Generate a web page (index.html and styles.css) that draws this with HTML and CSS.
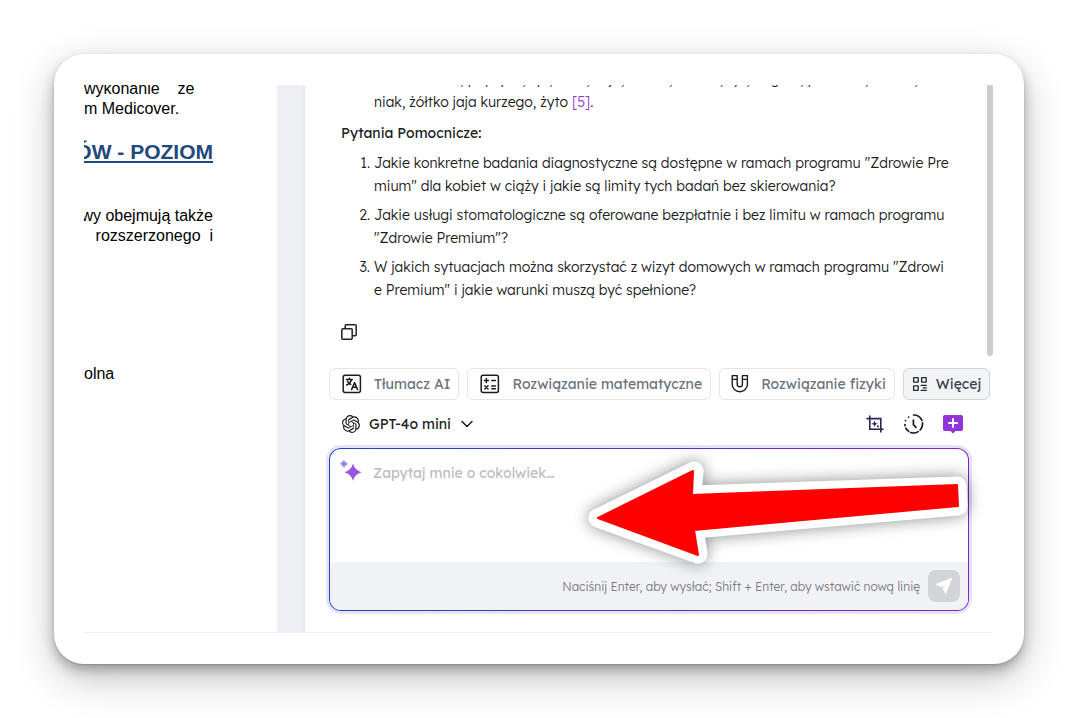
FILE: index.html
```html
<!DOCTYPE html>
<html lang="pl">
<head>
    <meta charset="UTF-8">
    <meta name="viewport" content="width=device-width, initial-scale=1.0">
    <title>Czat z dokumentem</title>
    <link rel="stylesheet" href="styles.css">
</head>
<body>
    <main class="card">
        <div class="workspace">
            <!-- Document preview -->
            <section class="document">
                <p class="doc-text doc-first">wykonanie    ze
m Medicover.</p>
                <h2 class="doc-heading"><span>ÓW - POZIOM</span></h2>
                <p class="doc-text doc-right">wy obejmują także
rozszerzonego  i</p>
                <p class="doc-text doc-last">olna</p>
            </section>

            <div class="divider"></div>

            <!-- Chat -->
            <section class="chat">
                <div class="messages">
                    <div class="answer">
                        <p class="answer-tail">mleko krowie, papryka, ryż, seler, soja, fasola, orzech, ryż, migdał, pszenica, banan, ziem<br>niak, żółtko jaja kurzego, żyto <a href="#">[5]</a>.</p>
                        <h3>Pytania Pomocnicze:</h3>
                        <ol>
                            <li>Jakie konkretne badania diagnostyczne są dostępne w ramach programu "Zdrowie Pre<br>mium" dla kobiet w ciąży i jakie są limity tych badań bez skierowania?</li>
                            <li>Jakie usługi stomatologiczne są oferowane bezpłatnie i bez limitu w ramach programu<br>"Zdrowie Premium"?</li>
                            <li>W jakich sytuacjach można skorzystać z wizyt domowych w ramach programu "Zdrowi<br>e Premium" i jakie warunki muszą być spełnione?</li>
                        </ol>
                        <button class="icon-btn copy-btn" type="button" aria-label="Kopiuj">
                            <svg width="16" height="16" viewBox="0 0 16 16" fill="none" stroke="#222" stroke-width="1.5" stroke-linejoin="round">
                                <rect x="0.8" y="4.8" width="10.4" height="10.4" rx="1"/>
                                <path d="M4.2 4.8V1.8a1 1 0 0 1 1-1h9a1 1 0 0 1 1 1v9a1 1 0 0 1-1 1h-3"/>
                            </svg>
                        </button>
                    </div>
                    <div class="scrollbar"></div>
                </div>

                <div class="chips">
                    <button class="chip" type="button">
                        <svg width="20" height="20" viewBox="0 0 20 20" fill="none" stroke="#1c1c1e" stroke-width="1.5" stroke-linecap="round" stroke-linejoin="round">
                            <rect x="1.2" y="1.2" width="17.2" height="17.2" rx="2"/>
                            <path d="M4.4 5.6h6M7.4 4.2v1.4M9.4 5.8C8.8 8.4 7 10 4.6 11M5.5 7.2c.7 1.5 1.7 2.4 3.2 3.2M9.6 15.6l3-7 3 7M10.7 13.3h3.8"/>
                        </svg>
                        Tłumacz AI
                    </button>
                    <button class="chip" type="button">
                        <svg width="20" height="20" viewBox="0 0 20 20" fill="none" stroke="#1c1c1e" stroke-width="1.5" stroke-linecap="round">
                            <rect x="1.2" y="1.2" width="17.2" height="17.2" rx="2"/>
                            <path d="M4.4 6.6h4M6.4 4.6v4M11.8 6.6h3.6M4.8 11.8l3.2 3.2M8 11.8L4.8 15M11.8 12h3.6M11.8 14.8h3.6"/>
                        </svg>
                        Rozwiązanie matematyczne
                    </button>
                    <button class="chip chip-physics" type="button">
                        <svg width="20" height="20" viewBox="0 0 20 20" fill="none" stroke="#1c1c1e" stroke-width="1.4" stroke-linejoin="round">
                            <path d="M2.2 1.6h5v8.6a2.6 2.6 0 0 0 5.2 0V1.600h5v8.600a7.600 7.600 0 0 1-15.200 0zM2.200 5.400h5M12.400 5.400h5"/>
                        </svg>
                        Rozwiązanie fizyki
                    </button>
                    <button class="chip chip-more" type="button">
                        <svg width="16" height="16" viewBox="0 0 16 16" fill="none" stroke="#222" stroke-width="1.3" stroke-linecap="round">
                            <rect x="1.6" y="1.6" width="4.6" height="4.6" rx=".5"/>
                            <rect x="9.6" y="1.6" width="4.6" height="4.6" rx=".5"/>
                            <rect x="1.6" y="9.8" width="4.6" height="4.6" rx=".5"/>
                            <path d="M9.2 9.4h5M11.4 11.9h2.8M9.2 14.4h5"/>
                        </svg>
                        Więcej
                    </button>
                </div>

                <div class="toolbar">
                    <button class="model" type="button">
                        <svg width="18" height="18" viewBox="0 0 24 24" fill="#1c1c1e">
                            <path d="M22.28 9.82a5.98 5.98 0 0 0-.52-4.91 6.05 6.05 0 0 0-6.51-2.9A6.07 6.07 0 0 0 4.98 4.18a5.98 5.98 0 0 0-4 2.9 6.05 6.05 0 0 0 .74 7.1 5.98 5.98 0 0 0 .51 4.91 6.05 6.05 0 0 0 6.51 2.9A5.98 5.98 0 0 0 13.26 24a6.06 6.06 0 0 0 5.77-4.21 5.99 5.99 0 0 0 4-2.9 6.06 6.06 0 0 0-.75-7.07zm-9.02 12.61a4.48 4.48 0 0 1-2.88-1.04l.14-.08 4.78-2.76a.8.8 0 0 0 .39-.68v-6.74l2.02 1.17a.07.07 0 0 1 .04.05v5.58a4.5 4.5 0 0 1-4.49 4.5zM3.6 18.3a4.47 4.47 0 0 1-.54-3.01l.14.08 4.78 2.76a.77.77 0 0 0 .78 0l5.84-3.37v2.33a.08.08 0 0 1-.03.06L9.74 19.95A4.5 4.5 0 0 1 3.6 18.3zM2.34 7.9a4.49 4.49 0 0 1 2.37-1.98v5.69a.77.77 0 0 0 .39.67l5.81 3.36-2.02 1.17a.08.08 0 0 1-.07 0l-4.83-2.79A4.5 4.5 0 0 1 2.34 7.87zm16.6 3.86L13.1 8.36l2.02-1.16a.08.08 0 0 1 .07 0l4.83 2.79a4.49 4.49 0 0 1-.68 8.1v-5.68a.79.79 0 0 0-.4-.65zm2.01-3.02l-.14-.09-4.77-2.78a.78.78 0 0 0-.79 0L9.41 9.23V6.9a.07.07 0 0 1 .03-.06l4.83-2.79a4.5 4.5 0 0 1 6.68 4.66zM8.31 12.86L6.29 11.7a.08.08 0 0 1-.04-.06V6.07a4.5 4.5 0 0 1 7.38-3.45l-.14.08L8.7 5.46a.8.8 0 0 0-.39.68zm1.1-2.36L12.01 9l2.6 1.5v3L12.02 15l-2.6-1.5z"/>
                        </svg>
                        GPT-4o mini
                        <svg width="14" height="12" viewBox="0 0 14 12" fill="none" stroke="#1c1c1e" stroke-width="1.5" stroke-linecap="round" stroke-linejoin="round">
                            <path d="M2 3.500l5 5 5-5"/>
                        </svg>
                    </button>
                    <div class="tools">
                        <button class="icon-btn" type="button" aria-label="Zrzut ekranu">
                            <svg width="20" height="20" viewBox="0 0 20 20" fill="none" stroke="#2b2355" stroke-width="1.6">
                                <path d="M1.4 4.6h14.4V18.4M4.8 1.6v13.6H18.6"/>
                                <path d="M9.600 6.600l.9 2.300 2.300.9-2.300.9-.9 2.300-.9-2.300-2.300-.9 2.300-.9z" fill="#2b2355" stroke="none"/>
                                <path d="M12 12.400h1.800" stroke-width="1.600"/>
                            </svg>
                        </button>
                        <button class="icon-btn" type="button" aria-label="Historia">
                            <svg width="20" height="20" viewBox="0 0 20 20" fill="none" stroke="#1c1c1e" stroke-width="1.7" stroke-linecap="round">
                                <path d="M9.600 1a9 9 0 0 1 8.300 5.400M18.500 8.800a9 9 0 0 1-2.400 7.200M14.200 17.600a9 9 0 0 1-7.600.9M4.600 17.400a9 9 0 0 1-2.800-3.200M1 11.600a9 9 0 0 1-.1-1"/>
                                <path d="M1.500 6.600v.1M4.600 3v.1M9.400 6v4.600l2.600 2.800"/>
                            </svg>
                        </button>
                        <button class="icon-btn" type="button" aria-label="Nowy czat">
                            <svg width="20" height="20" viewBox="0 0 20 20">
                                <path d="M2 1h16a2 2 0 0 1 2 2v12a2 2 0 0 1-2 2h-5.4L10 19.4 7.4 17H2a2 2 0 0 1-2-2V3a2 2 0 0 1 2-2z" fill="#9135d8"/>
                                <path d="M10 5v8M6 9h8" stroke="#fff" stroke-width="2" stroke-linecap="round"/>
                            </svg>
                        </button>
                    </div>
                </div>

                <form class="composer">
                    <div class="composer-main">
                        <svg width="24" height="24" viewBox="0 0 24 24">
                            <defs>
                                <linearGradient id="spark" x1="0" y1="0" x2="1" y2="1">
                                    <stop offset="0" stop-color="#8a5be0"/>
                                    <stop offset="1" stop-color="#a44fe6"/>
                                </linearGradient>
                            </defs>
                            <path d="M14 5.600q1.800 6.800 8.600 8.600-6.800 1.800-8.600 8.600-1.800-6.800-8.600-8.600 6.800-1.800 8.600-8.600z" fill="url(#spark)"/>
                            <path d="M5 1.600q.9 3.400 4.300 4.300-3.400.9-4.300 4.300-.9-3.400-4.300-4.300 3.400-.9 4.300-4.300z" fill="#a17be8"/>
                        </svg>
                        <textarea aria-label="Wiadomość" placeholder="Zapytaj mnie o cokolwiek…"></textarea>
                    </div>
                    <div class="composer-footer">
                        <span>Naciśnij Enter, aby wysłać; Shift + Enter, aby wstawić nową linię</span>
                        <button class="send" type="button" aria-label="Wyślij">
                            <svg width="18" height="18" viewBox="0 0 18 18" fill="#fff">
                                <path d="M16.600 1.400L10.600 16.600 8.200 11 12 6.200 7 9.800.900 7.400z" stroke="#fff" stroke-width="1" stroke-linejoin="round"/>
                            </svg>
                        </button>
                    </div>

                    <!-- Arrow pointing at the text box -->
                    <svg class="arrow" width="430" height="150" viewBox="570 440 430 150" aria-hidden="true">
                        <path d="M598 518L694 471 692 495 957 486 958 506 694 529 698 554z" fill="#fff" stroke="#fff" stroke-width="19" stroke-linejoin="round"/>
                        <path d="M598 518L693 471 692 495 957 485 958 506 694 530 698 555z" fill="#f00" stroke="#f00" stroke-width="2" stroke-linejoin="round"/>
                    </svg>
                </form>
            </section>
        </div>
    </main>
</body>
</html>
```
FILE: styles.css
```css
* {
    margin: 0;
    padding: 0;
    box-sizing: border-box;
}

body {
    padding: 54px;
    background: #fff;
    color: #202022;
    font-family: Lexend, "Noto Sans", sans-serif;
    font-size: 14px;
}

button,
textarea {
    border: none;
    background: none;
    color: inherit;
    font: inherit;
}

button {
    cursor: pointer;
}

.card {
    padding: 31px 31px 31px 30px;
    border-radius: 30px;
    background: #fff;
    box-shadow: 0 1px 2px rgba(0, 0, 0, 0.15), 0 6px 12px rgba(0, 0, 0, 0.26), 0 14px 40px rgba(0, 0, 0, 0.24);
}

.workspace {
    display: grid;
    grid-template-columns: 193px 28px 1fr;
    border-bottom: 1px solid #f0f0f0;
}

/* Document preview */
.document {
    overflow: hidden;
    padding-right: 64px;
    color: #000;
    font-family: "Liberation Sans", Arial, sans-serif;
}

.doc-text {
    font-size: 16px;
    line-height: 20px;
    white-space: pre;
}

.doc-first {
    margin-top: -6px;
}

.doc-heading {
    display: flex;
    justify-content: flex-end;
    margin: 20px 0 41px;
    color: #1f497d;
    font-size: 21px;
    line-height: 26px;
    text-decoration: underline;
    white-space: nowrap;
}

.doc-right {
    display: flex;
    justify-content: flex-end;
    text-align: right;
}

.doc-last {
    margin-top: 118px;
}

.divider {
    border-right: 2px solid #e8e8ea;
    background: #eeeff4;
}

/* Chat */
.chat {
    min-width: 0;
    padding: 0 3px 21px 24px;
}

.messages {
    display: flex;
    justify-content: space-between;
    height: 271px;
    margin-right: -3px;
    overflow: hidden;
}

.answer {
    margin-top: -17px;
    padding-left: 12px;
    font-weight: 300;
    line-height: 23px;
    white-space: nowrap;
}

.answer-tail {
    padding-left: 33px;
}

.answer a {
    color: #8f35d6;
    text-decoration: none;
}

.answer h3 {
    margin: 8px 0 7px;
    font-size: 14px;
    font-weight: 400;
}

.answer ol {
    display: grid;
    gap: 6px;
    padding-left: 33px;
}

.scrollbar {
    flex: none;
    width: 6px;
    border-radius: 0 0 3px 3px;
    background: #cdcdcd;
}

.icon-btn {
    display: flex;
}

.copy-btn {
    margin-top: 22px;
}

.chips {
    display: flex;
    gap: 8px;
    margin-top: 12px;
}

.chip {
    display: flex;
    align-items: center;
    gap: 12px;
    height: 32px;
    padding: 0 8px 0 12px;
    border: 1px solid #e4e5e9;
    border-radius: 6px;
    color: #6b7280;
    font-weight: 400;
    white-space: nowrap;
}

.chip-physics {
    gap: 11px;
    padding-left: 10px;
}

.chip-more {
    gap: 8px;
    padding-left: 8px;
    border-color: #d1d5db;
    background: #f3f4f6;
    color: #374151;
}

.toolbar {
    display: flex;
    align-items: center;
    justify-content: space-between;
    height: 48px;
    padding: 0 27px 0 13px;
}

.model {
    display: flex;
    align-items: center;
    gap: 9px;
    font-weight: 400;
}

.tools {
    display: flex;
    gap: 19px;
}

.composer {
    position: relative;
    margin-right: 21px;
    border: 1px solid transparent;
    border-radius: 12px;
    background: linear-gradient(#fff, #fff) padding-box, linear-gradient(90deg, #1d46b8, #8a1fc4) border-box;
    box-shadow: 0 0 0 3px #e6e4fb;
}

.composer-main {
    display: flex;
    align-items: flex-start;
    gap: 10px;
    height: 113px;
    padding: 9px;
}

.composer-main textarea {
    flex: 1;
    height: 95px;
    padding-top: 3px;
    line-height: 24px;
    outline: none;
    resize: none;
}

.composer-main textarea::placeholder {
    color: #bdbdbf;
}

.composer-footer {
    display: flex;
    align-items: center;
    justify-content: flex-end;
    gap: 8px;
    height: 48px;
    padding-right: 8px;
    border-radius: 0 0 11px 11px;
    background: #f1f2f6;
    color: #7c7c80;
    font-size: 12px;
    font-weight: 300;
}

.send {
    display: grid;
    place-items: center;
    width: 32px;
    height: 32px;
    border-radius: 8px;
    background: #d3d4da;
}

.arrow {
    position: absolute;
    top: -9px;
    right: -32px;
    filter: drop-shadow(0 0 8px rgba(0, 0, 0, 0.45));
    pointer-events: none;
}
```
